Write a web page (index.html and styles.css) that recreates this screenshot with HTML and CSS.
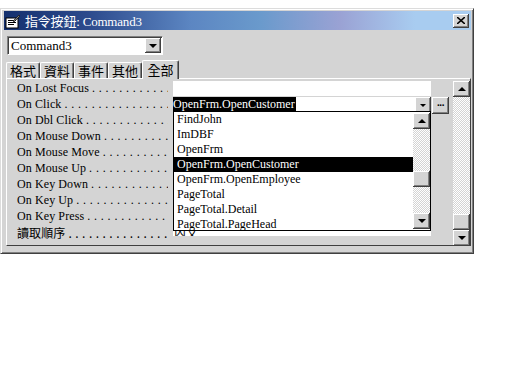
FILE: index.html
```html
<!DOCTYPE html>
<html lang="zh-Hant">
  <head>
    <meta charset="UTF-8" />
    <title>指令按鈕: Command3</title>
    <link rel="stylesheet" href="styles.css">
  </head>
  <body>
    <div class="window">
      <div class="titlebar">
        <svg class="title-icon" width="16" height="16" viewBox="0 0 16 16">
          <rect x="1" y="5" width="12" height="10" fill="#fff" stroke="#000" />
          <rect x="3" y="7" width="8" height="1" fill="#000" />
          <rect x="3" y="9" width="8" height="1" fill="#000" />
          <rect x="3" y="11" width="6" height="1" fill="#000" />
          <path d="M8 8 L14 2 L15 3 L9 9 Z" fill="#808080" stroke="#000" stroke-width="0.6" />
        </svg>
        <span class="title-text">指令按鈕: Command3</span>
        <button class="close-btn">
          <svg width="8" height="7" viewBox="0 0 8 7"><path d="M0 0 L8 7 M8 0 L0 7" stroke="#000" stroke-width="1.6" /></svg>
        </button>
      </div>

      <div class="selector">
        <span class="selector-text">Command3</span>
        <span class="drop-btn"><i class="arrow-down"></i></span>
      </div>

      <div class="tabs">
        <span class="tab">格式</span>
        <span class="tab">資料</span>
        <span class="tab">事件</span>
        <span class="tab">其他</span>
        <span class="tab active">全部</span>
      </div>

      <div class="panel">
        <div class="props">
          <div class="label"><span>On Lost Focus</span><span class="dots">. . . . . . . . . . . . . . . . . . . . . . . . .</span></div>
          <div class="value"></div>
          <div class="extra"></div>

          <div class="label"><span>On Click</span><span class="dots">. . . . . . . . . . . . . . . . . . . . . . . . .</span></div>
          <div class="value editing">
            <span class="sel-text">OpenFrm.OpenCustomer</span>
            <span class="small-btn"><i class="arrow-down"></i></span>
          </div>
          <div class="extra"><span class="builder-btn">...</span></div>

          <div class="label"><span>On Dbl Click</span><span class="dots">. . . . . . . . . . . . . . . . . . . . . . . . .</span></div>
          <div class="value"></div>
          <div class="extra"></div>

          <div class="label"><span>On Mouse Down</span><span class="dots">. . . . . . . . . . . . . . . . . . . . . . . . .</span></div>
          <div class="value"></div>
          <div class="extra"></div>

          <div class="label"><span>On Mouse Move</span><span class="dots">. . . . . . . . . . . . . . . . . . . . . . . . .</span></div>
          <div class="value"></div>
          <div class="extra"></div>

          <div class="label"><span>On Mouse Up</span><span class="dots">. . . . . . . . . . . . . . . . . . . . . . . . .</span></div>
          <div class="value"></div>
          <div class="extra"></div>

          <div class="label"><span>On Key Down</span><span class="dots">. . . . . . . . . . . . . . . . . . . . . . . . .</span></div>
          <div class="value"></div>
          <div class="extra"></div>

          <div class="label"><span>On Key Up</span><span class="dots">. . . . . . . . . . . . . . . . . . . . . . . . .</span></div>
          <div class="value"></div>
          <div class="extra"></div>

          <div class="label"><span>On Key Press</span><span class="dots">. . . . . . . . . . . . . . . . . . . . . . . . .</span></div>
          <div class="value"></div>
          <div class="extra"></div>

          <div class="label cjk"><span>讀取順序</span><span class="dots">. . . . . . . . . . . . . . . . . . . . . . . . .</span></div>
          <div class="value cjk last">內文</div>
          <div class="extra"></div>

          <!-- 下拉清單 -->
          <div class="droplist">
            <ul class="items">
              <li>FindJohn</li>
              <li>ImDBF</li>
              <li>OpenFrm</li>
              <li class="picked">OpenFrm.OpenCustomer</li>
              <li>OpenFrm.OpenEmployee</li>
              <li>PageTotal</li>
              <li>PageTotal.Detail</li>
              <li>PageTotal.PageHead</li>
            </ul>
            <div class="vscroll inner">
              <span class="sbtn"><i class="arrow-up"></i></span>
              <span class="track"></span>
              <span class="thumb"></span>
              <span class="track short"></span>
              <span class="sbtn"><i class="arrow-down"></i></span>
            </div>
          </div>
        </div>

        <div class="vscroll outer">
          <span class="sbtn"><i class="arrow-up"></i></span>
          <span class="track"></span>
          <span class="thumb"></span>
          <span class="sbtn"><i class="arrow-down"></i></span>
        </div>
      </div>
    </div>
  </body>
</html>
```

FILE: styles.css
```css
body {
  margin: 0;
  background: #fff;
  font-family: "Liberation Serif", "Noto Sans CJK TC", serif;
  font-size: 12px;
  color: #000;
}

.window {
  margin-top: 8px;
  width: 474px;
  height: 246px;
  box-sizing: border-box;
  background: #d4d4d4;
  border-top: 1px solid #dcdcdc;
  border-left: 1px solid #dcdcdc;
  border-right: 1px solid #404040;
  border-bottom: 1px solid #404040;
  box-shadow: inset 1px 1px 0 #fff, inset -1px -1px 0 #808080;
  padding: 2px 2px 0 3px;
}

.titlebar {
  height: 19px;
  display: flex;
  align-items: center;
  background: linear-gradient(to right, #14306e 0%, #2c4a8c 18%, #5c86c2 40%, #6a9acc 55%, #9aa2d4 72%, #a8ccf0 88%, #a8ccf0 100%);
  padding-left: 1px;
  padding-right: 2px;
}

.title-icon {
  flex: none;
}

.title-text {
  color: #fff;
  font-family: "Liberation Serif", "Noto Sans CJK TC", serif;
  font-size: 13px;
  margin-left: 4px;
  flex: 1;
  letter-spacing: -0.2px;
}

.close-btn {
  width: 16px;
  height: 14px;
  padding: 0;
  background: #d4d4d4;
  border: none;
  box-shadow: inset -1px -1px 0 #404040, inset 1px 1px 0 #fff, inset -2px -2px 0 #808080;
  display: flex;
  align-items: center;
  justify-content: center;
}

.selector {
  margin: 6px 0 0 3px;
  width: 156px;
  height: 19px;
  box-sizing: border-box;
  background: #fff;
  border-top: 1px solid #808080;
  border-left: 1px solid #808080;
  border-right: 1px solid #fff;
  border-bottom: 1px solid #fff;
  box-shadow: inset 1px 1px 0 #404040;
  display: flex;
  align-items: center;
  padding: 1px 1px 1px 3px;
}

.selector-text {
  flex: 1;
  font-family: "Liberation Serif", serif;
  font-size: 13px;
}

.drop-btn,
.small-btn,
.sbtn {
  background: #d4d4d4;
  box-shadow: inset -1px -1px 0 #404040, inset 1px 1px 0 #fff, inset -2px -2px 0 #808080;
  display: flex;
  align-items: center;
  justify-content: center;
  box-sizing: border-box;
}

.drop-btn {
  width: 16px;
  height: 15px;
}

.arrow-down,
.arrow-up {
  width: 0;
  height: 0;
  border-left: 4px solid transparent;
  border-right: 4px solid transparent;
}

.arrow-down {
  border-top: 4px solid #000;
}

.arrow-up {
  border-bottom: 4px solid #000;
}

.tabs {
  margin-top: 5px;
  margin-left: 2px;
  display: flex;
  align-items: flex-end;
  height: 18px;
}

.tab {
  font-family: "Noto Sans CJK TC", sans-serif;
  font-size: 13px;
  line-height: 15px;
  height: 15px;
  padding: 0 2px;
  width: 28px;
  text-align: center;
  border-top: 1px solid #fff;
  border-left: 1px solid #fff;
  border-right: 1px solid #404040;
  box-shadow: inset -1px 0 0 #808080;
  border-radius: 2px 2px 0 0;
}

.tab.active {
  height: 18px;
  line-height: 17px;
  width: 31px;
  background: #d4d4d4;
  position: relative;
  top: 1px;
}

.panel {
  margin-left: 2px;
  width: 465px;
  height: 168px;
  box-sizing: border-box;
  border-top: 1px solid #fff;
  border-left: 1px solid #fff;
  border-right: 1px solid #404040;
  border-bottom: 1px solid #404040;
  padding: 2px 0 0 0;
  display: flex;
}

.props {
  position: relative;
  display: grid;
  grid-template-columns: 166px 258px 18px;
  grid-auto-rows: 16px;
  width: 442px;
}

.label {
  display: flex;
  padding-left: 10px;
  line-height: 15px;
  white-space: nowrap;
  overflow: hidden;
  letter-spacing: 0.1px;
}

.label.cjk {
  font-family: "Noto Sans CJK TC", sans-serif;
  font-size: 12px;
}

.dots {
  flex: 1;
  overflow: hidden;
  padding-left: 3px;
  margin-right: 5px;
  letter-spacing: 0.4px;
}

.value {
  background: #fff;
  height: 15px;
  line-height: 15px;
  padding-left: 1px;
  overflow: hidden;
}

.value.cjk {
  font-family: "Noto Sans CJK TC", sans-serif;
}

.value.last {
  height: 11px;
}

.value.editing {
  display: flex;
  align-items: flex-start;
  box-shadow: inset 0 -1px 0 #000;
  height: 16px;
  padding-left: 0;
}

.sel-text {
  background: #000;
  color: #fff;
  height: 14px;
  line-height: 14px;
  padding-right: 1px;
}

.small-btn {
  margin-left: auto;
  width: 16px;
  height: 16px;
}

.small-btn .arrow-down {
  border-left-width: 3px;
  border-right-width: 3px;
  border-top-width: 3px;
}

.extra {
  display: flex;
  justify-content: flex-end;
}

.builder-btn {
  width: 17px;
  height: 17px;
  box-sizing: border-box;
  background: #d4d4d4;
  box-shadow: inset -1px -1px 0 #404040, inset 1px 1px 0 #fff, inset -2px -2px 0 #808080;
  font-family: "Liberation Sans", sans-serif;
  font-weight: bold;
  font-size: 10px;
  line-height: 12px;
  text-align: center;
  letter-spacing: -0.5px;
}

.droplist {
  position: absolute;
  left: 166px;
  top: 30px;
  width: 258px;
  height: 120px;
  box-sizing: border-box;
  border: 1px solid #000;
  background: #fff;
  display: flex;
}

.items {
  list-style: none;
  margin: 0;
  padding: 0;
  flex: 1;
}

.items li {
  height: 15px;
  line-height: 15px;
  padding-left: 3px;
}

.items li.picked {
  background: #000;
  color: #fff;
}

.vscroll {
  display: flex;
  flex-direction: column;
  width: 17px;
  flex: none;
}

.vscroll.inner {
  padding: 1px 0;
}

.vscroll .sbtn {
  height: 16px;
  flex: none;
}

.vscroll .track {
  flex: 1;
  background-color: #fff;
  background-image: repeating-conic-gradient(#d4d4d4 0 25%, #fff 0 50%);
  background-size: 2px 2px;
}

.vscroll .track.short {
  flex: none;
  height: 26px;
}

.vscroll .thumb {
  height: 16px;
  flex: none;
  background: #d4d4d4;
  box-shadow: inset -1px -1px 0 #404040, inset 1px 1px 0 #fff, inset -2px -2px 0 #808080;
}

.vscroll.outer {
  margin-left: 4px;
  height: 165px;
}
```
